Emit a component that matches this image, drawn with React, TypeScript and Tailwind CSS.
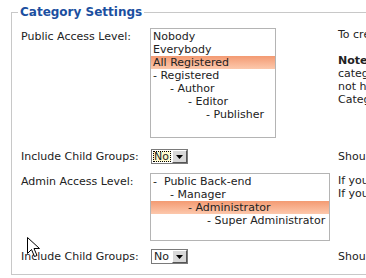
import React from 'react';

const font = { fontFamily: '"DejaVu Sans", Verdana, sans-serif' };

type Opt = { label: string; indent: number; selected?: boolean };

const publicOptions: Opt[] = [
  { label: 'Nobody', indent: 0 },
  { label: 'Everybody', indent: 0 },
  { label: 'All Registered', indent: 0, selected: true },
  { label: '- Registered', indent: 0 },
  { label: '- Author', indent: 17 },
  { label: '- Editor', indent: 35 },
  { label: '- Publisher', indent: 53 },
];

const adminOptions: Opt[] = [
  { label: '-  Public Back-end', indent: 0 },
  { label: '- Manager', indent: 17 },
  { label: '- Administrator', indent: 35, selected: true },
  { label: '- Super Administrator', indent: 54 },
];

const ListBox: React.FC<{ options: Opt[]; className: string }> = ({ options, className }) => (
  <div className={`border border-[#b4b4b4] bg-white pt-[1px] ${className}`}>
    {options.map((o) => (
      <div
        key={o.label}
        className={`h-[13px] leading-[13px] pl-[2px] whitespace-pre text-[11px] text-[#222] ${
          o.selected ? 'bg-gradient-to-b from-[#f39a72] to-[#fcc8ac]' : ''
        }`}
      >
        <span style={{ paddingLeft: o.indent }}>{o.label}</span>
      </div>
    ))}
  </div>
);

const YesNo: React.FC<{ focused?: boolean }> = ({ focused }) => (
  <div className="flex h-[15px] w-[37px] border border-[#7a7a7a] bg-white">
    <div className="flex-1 p-[1px]">
      <div
        className={`h-full leading-[11px] text-[11px] text-[#222] pl-[1px] ${
          focused ? 'bg-[#fffbd0] outline-1 outline-dotted outline-black -outline-offset-1' : ''
        }`}
      >
        No
      </div>
    </div>
    <div className="w-[15px] flex items-center justify-center bg-[#d8d8d8] border-t border-l border-t-white border-l-white border-r border-b border-r-[#555] border-b-[#555]">
      <svg width="7" height="4" viewBox="0 0 7 4">
        <polygon points="0,0 7,0 3.5,4" fill="#000" />
      </svg>
    </div>
  </div>
);

export default function App() {
  return (
    <div className="relative w-[366px] h-[278px] overflow-hidden bg-white" style={font}>
      <fieldset className="ml-[11px] mt-[4px] w-[400px] h-[271px] border border-[#c8c8c8]">
        <legend className="ml-[6px] px-[2px] text-[12px] leading-[16px] font-bold text-[#1b4fa0]">
          Category Settings
        </legend>

        <div className="pl-[9px] text-[11px] text-[#222]">
          <div className="flex pt-[8px]">
            <div className="w-[129px] pt-[2px] leading-[13px]">Public Access Level:</div>
            <div className="w-[188px]">
              <ListBox options={publicOptions} className="w-[126px] h-[110px]" />
            </div>
            <div className="leading-[13px] whitespace-nowrap">
              <div>To create a new category</div>
              <div>&nbsp;</div>
              <div>
                <span className="font-bold">Note:</span> These are
              </div>
              <div>categories which the user</div>
              <div>not have access to via the</div>
              <div>Category Manager.</div>
            </div>
          </div>

          <div className="flex items-center pt-[11px]">
            <div className="w-[129px] leading-[13px]">Include Child Groups:</div>
            <div className="w-[188px] pl-[1px]">
              <YesNo focused />
            </div>
            <div className="leading-[13px] whitespace-nowrap">Should child groups be</div>
          </div>

          <div className="flex pt-[9px]">
            <div className="w-[129px] pt-[2px] leading-[13px]">Admin Access Level:</div>
            <div className="w-[188px]">
              <ListBox options={adminOptions} className="w-[180px] h-[68px]" />
            </div>
            <div className="leading-[13px] pt-[1px] whitespace-nowrap">
              <div>If you select a group</div>
              <div>If you want to allow</div>
            </div>
          </div>

          <div className="flex items-center pt-[8px]">
            <div className="w-[129px] leading-[13px]">Include Child Groups:</div>
            <div className="w-[188px] pl-[1px]">
              <YesNo />
            </div>
            <div className="leading-[13px] whitespace-nowrap">Should child groups be</div>
          </div>
        </div>
      </fieldset>

      <svg className="absolute left-[27px] top-[237px]" width="13" height="21" viewBox="0 0 13 21">
        <path d="M0.5 0.5 L0.5 16.5 L4.5 12.5 L7.5 19.5 L10 18.5 L7 11.5 L12.5 11.5 Z" fill="#fff" stroke="#000" strokeWidth="1" />
      </svg>
    </div>
  );
}
